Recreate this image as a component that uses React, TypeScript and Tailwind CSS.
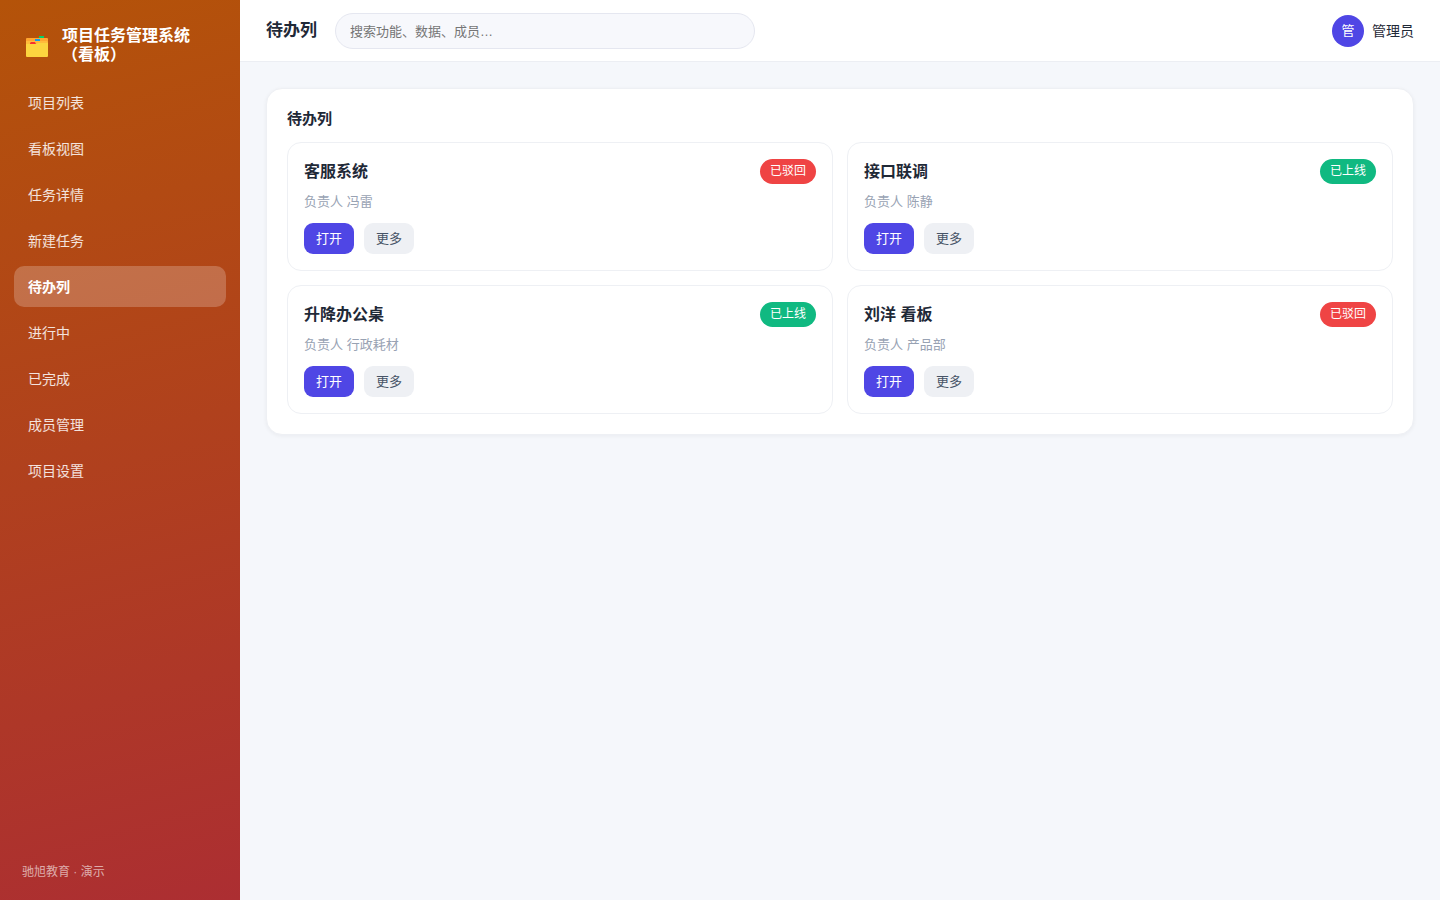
import React from 'react';

interface Task {
  title: string;
  owner: string;
  status: 'rejected' | 'online';
}

const navItems = [
  '项目列表',
  '看板视图',
  '任务详情',
  '新建任务',
  '待办列',
  '进行中',
  '已完成',
  '成员管理',
  '项目设置',
];

const tasks: Task[] = [
  { title: '客服系统', owner: '冯雷', status: 'rejected' },
  { title: '接口联调', owner: '陈静', status: 'online' },
  { title: '升降办公桌', owner: '行政耗材', status: 'online' },
  { title: '刘洋 看板', owner: '产品部', status: 'rejected' },
];

const statusMap = {
  rejected: { label: '已驳回', className: 'bg-[#ef4444]' },
  online: { label: '已上线', className: 'bg-[#10b981]' },
};

const FolderIcon: React.FC = () => (
  <svg width="22" height="26" viewBox="0 -4 22 26" className="shrink-0" aria-hidden="true">
    <rect x="13" y="0" width="5" height="3" fill="#00d26a" />
    <path d="M1 2h20a1 1 0 0 1 1 1v9H0V3a1 1 0 0 1 1-1z" fill="#ffa62f" />
    <path d="M13 0h5v2h-5z" fill="#00d26a" />
    <path d="M0 5h21l1 1v6H0z" fill="#ffbc3b" />
    <path d="M9 3h5v2H9z" fill="#0f9bf0" />
    <path d="M0 8h10l2-1h10v13a1 1 0 0 1-1 1H1a1 1 0 0 1-1-1z" fill="#fcd53f" />
    <path d="M4 8V7l1-1h4l1 2z" fill="#f8312f" />
  </svg>
);

const Sidebar: React.FC = () => (
  <aside className="flex w-60 shrink-0 flex-col bg-[linear-gradient(165deg,#b45309,#ac2e32)] px-[14px] pt-[26px] pb-5 text-white">
    <div className="flex items-center gap-[14px] px-3">
      <FolderIcon />
      <div className="text-base leading-[19px] font-bold">项目任务管理系统（看板）</div>
    </div>
    <nav className="mt-[18px] flex flex-col gap-[5px]">
      {navItems.map(item => (
        <a
          key={item}
          href="#"
          className={
            item === '待办列'
              ? 'flex h-[41px] items-center rounded-[10px] bg-white/22 px-[14px] text-sm font-bold text-white'
              : 'flex h-[41px] items-center rounded-[10px] px-[14px] text-sm text-white/85'
          }
        >
          {item}
        </a>
      ))}
    </nav>
    <div className="mt-auto px-2 text-xs leading-4 text-white/60">驰旭教育 · 演示</div>
  </aside>
);

const Header: React.FC = () => (
  <header className="flex items-center gap-[18px] border-b border-[#eceef3] bg-white px-[26px] pt-[13px] pb-3">
    <h1 className="text-[17px] leading-6 font-bold">待办列</h1>
    <input
      type="search"
      aria-label="搜索"
      placeholder="搜索功能、数据、成员…"
      className="h-9 w-[420px] rounded-full border border-[#e5e7f0] bg-[#f7f8fc] px-[14px] text-[13px] outline-none placeholder:text-[#757575]"
    />
    <div className="ml-auto flex items-center gap-2 text-sm">
      <span className="flex size-8 items-center justify-center rounded-full bg-[#4f46e5] text-[13px] text-white">管</span>
      <span>管理员</span>
    </div>
  </header>
);

const TaskCard: React.FC<{ task: Task }> = ({ task }) => {
  const status = statusMap[task.status];

  return (
    <article className="rounded-[14px] border border-[#eef0f4] bg-white p-4">
      <div className="flex items-center justify-between">
        <h3 className="text-base leading-[25px] font-bold">{task.title}</h3>
        <span className={`rounded-full px-[10px] text-xs leading-[25px] text-white ${status.className}`}>
          {status.label}
        </span>
      </div>
      <p className="mt-2 text-[13px] leading-[19px] text-[#98a2b3]">负责人 {task.owner}</p>
      <div className="mt-3 flex gap-[10px]">
        <button type="button" className="h-[31px] rounded-[9px] bg-[#4f46e5] px-3 text-[13px] text-white">
          打开
        </button>
        <button type="button" className="h-[31px] rounded-[9px] bg-[#eef0f4] px-3 text-[13px] text-[#475467]">
          更多
        </button>
      </div>
    </article>
  );
};

const App: React.FC = () => {
  return (
    <div className="flex min-h-screen bg-[#f5f7fb] font-['Liberation_Sans','Noto_Sans_CJK_SC',sans-serif] text-[#1f2937]">
      <Sidebar />
      <div className="min-w-0 flex-1">
        <Header />
        <main className="p-[26px]">
          <section className="rounded-2xl border border-[#eef0f4] bg-white p-5 shadow-[0_1px_4px_rgba(16,24,40,0.05)]">
            <h2 className="text-[15px] leading-[19px] font-bold">待办列</h2>
            <div className="mt-[14px] grid grid-cols-2 gap-[14px]">
              {tasks.map(task => (
                <TaskCard key={task.title} task={task} />
              ))}
            </div>
          </section>
        </main>
      </div>
    </div>
  );
};

export default App;
